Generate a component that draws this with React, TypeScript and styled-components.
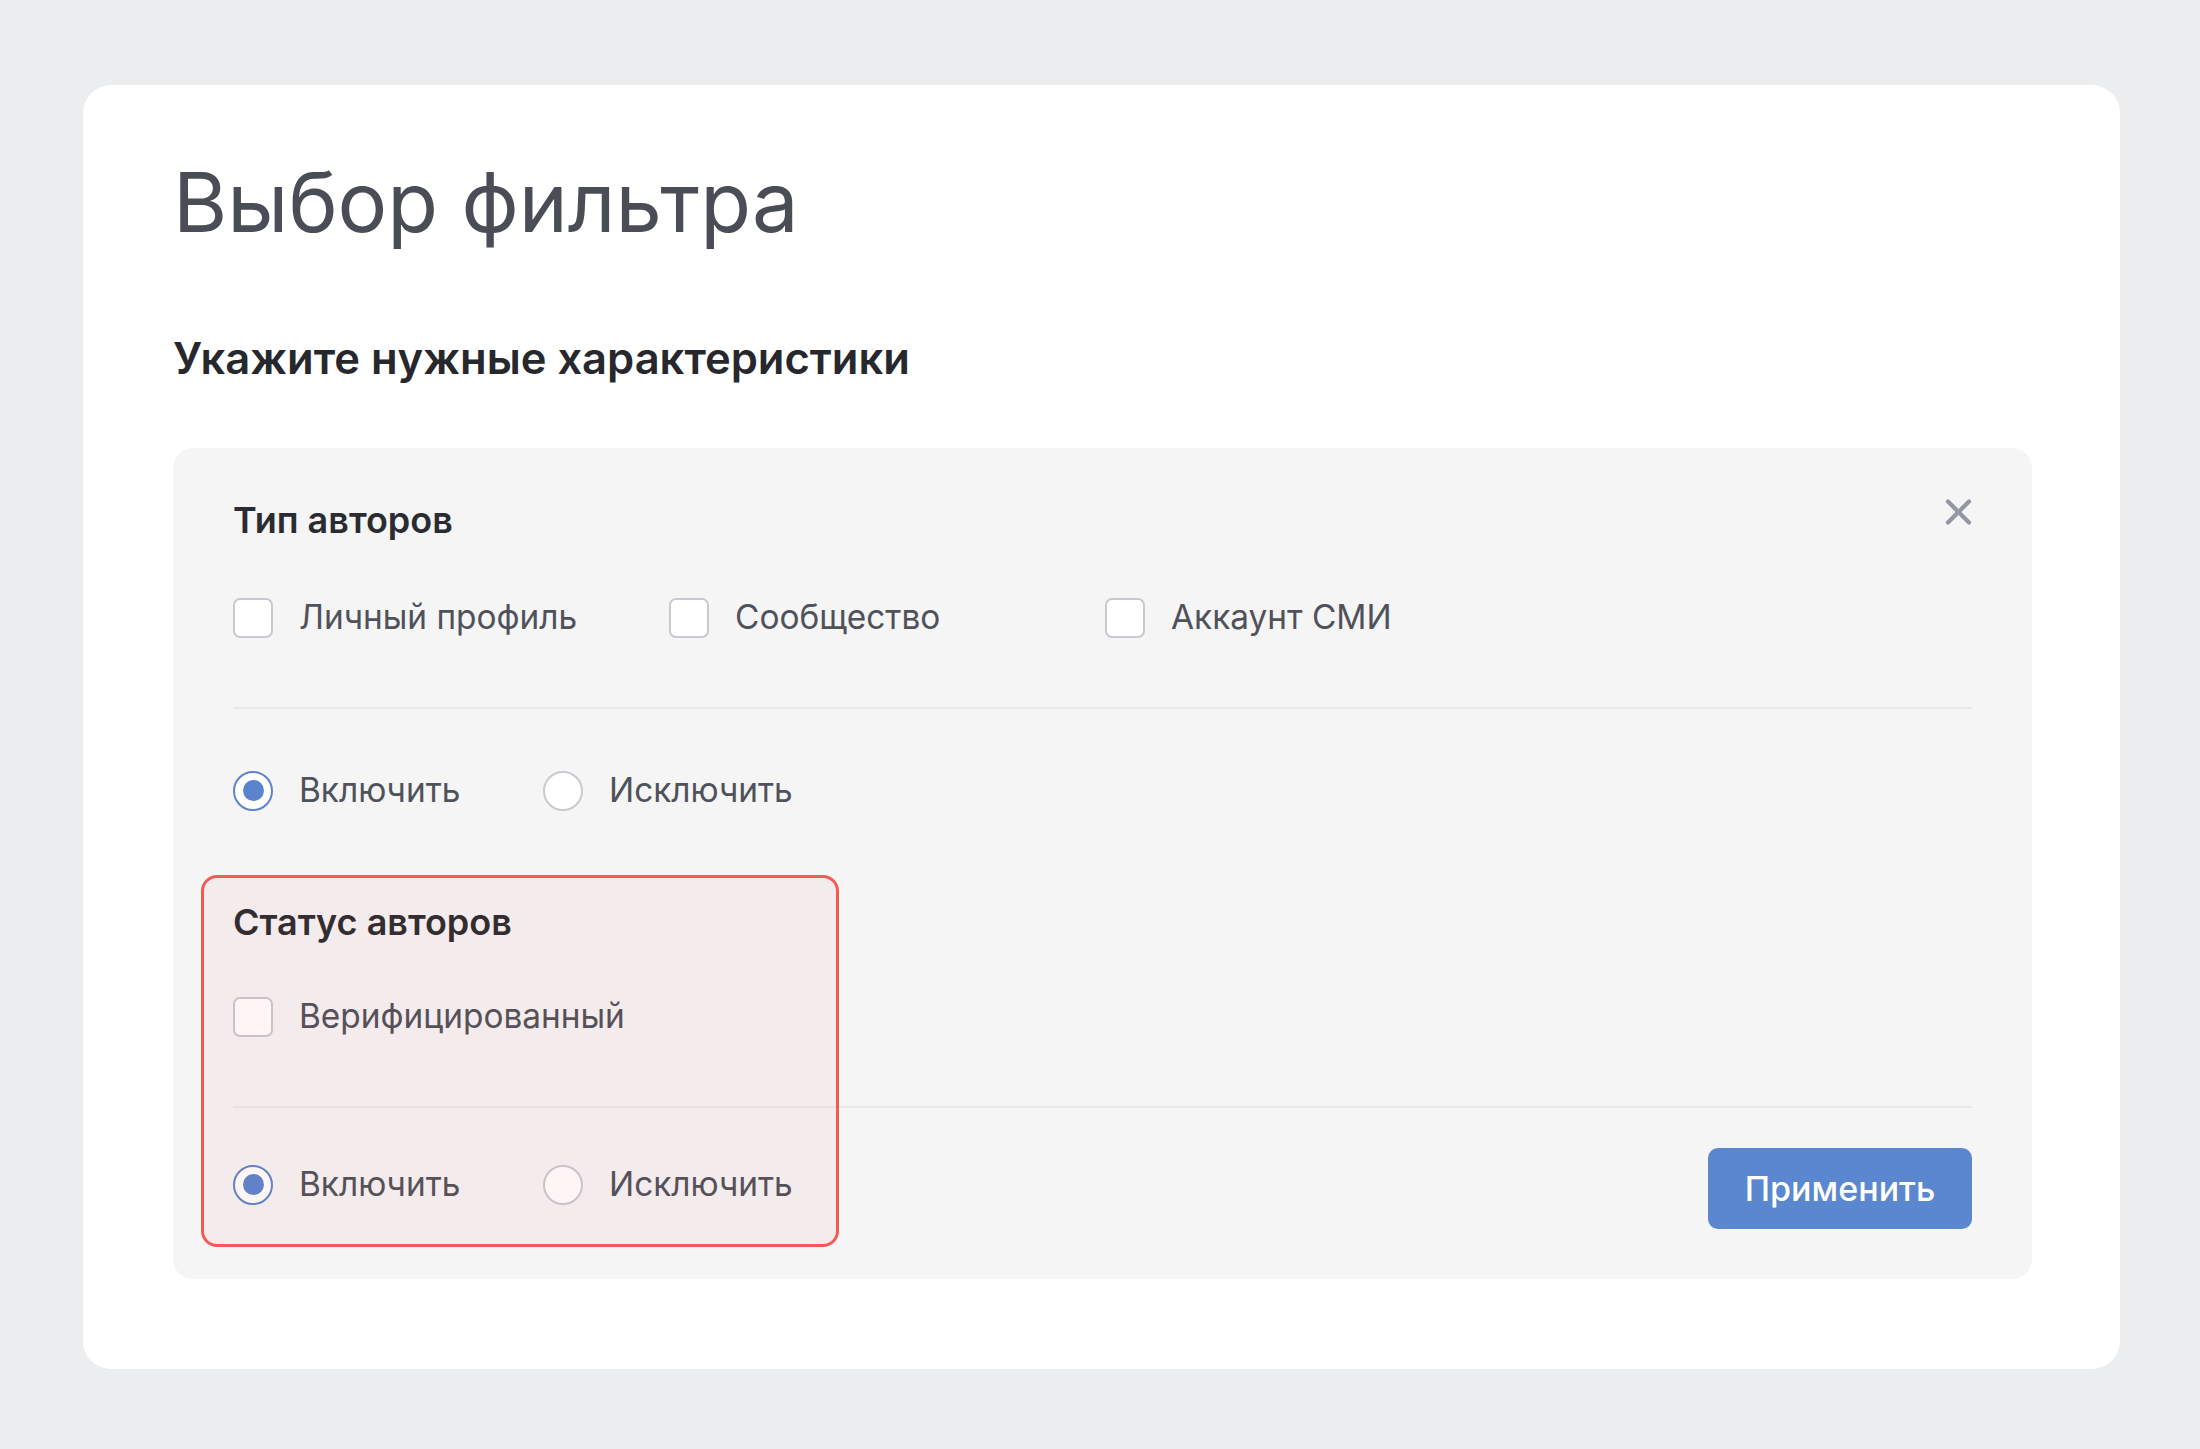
import { ReactNode } from 'react';
import styled, { createGlobalStyle } from 'styled-components';

const GlobalStyle = createGlobalStyle`
  body {
    margin: 0;
    background: #ecedef;
    font-family: Inter, "Noto Sans", sans-serif;
  }
`;

const AUTHOR_TYPES = ['Личный профиль', 'Сообщество', 'Аккаунт СМИ'];

const ScPage = styled.div`
  padding: 85px 80px 81px 83px;
`;

const ScCard = styled.div`
  background: #fff;
  border-radius: 28px;
  padding: 69px 88px 90px 90px;
`;

const ScTitle = styled.h1`
  margin: 0;
  font-size: 83px;
  font-weight: 400;
  line-height: 97px;
  color: #4a4d56;
`;

const ScSubtitle = styled.h2`
  margin: 81px 0 63px;
  font-size: 43.5px;
  font-weight: 600;
  line-height: 53px;
  color: #26282d;
`;

const ScPanel = styled.div`
  background: #f5f5f5;
  border-radius: 20px;
  padding: 50px 60px;
`;

const ScSection = styled.section<{ $gap?: number }>`
  position: relative;
  margin-top: ${p => p.$gap ?? 0}px;
`;

const ScHeader = styled.div`
  display: flex;
  justify-content: space-between;
  align-items: flex-start;
`;

const ScSectionTitle = styled.h3`
  margin: 0;
  font-size: 36px;
  font-weight: 600;
  line-height: 44px;
  color: #2a2c31;
`;

const ScClose = styled.button`
  border: 0;
  background: none;
  padding: 0;
  width: 27px;
  height: 28px;
  display: flex;
  color: #9497a3;
  cursor: pointer;
`;

const ScOptionGrid = styled.div<{ $top: number }>`
  display: grid;
  grid-template-columns: repeat(3, 436px);
  margin-top: ${p => p.$top}px;
`;

const ScOption = styled.label`
  display: flex;
  align-items: center;
  gap: 26px;
  font-size: 33.4px;
  line-height: 41px;
  color: #4f525a;
`;

const ScCheckbox = styled.span`
  flex: none;
  width: 40px;
  height: 40px;
  box-sizing: border-box;
  border: 2px solid #c8cad0;
  border-radius: 7px;
  background: #fff;
`;

const ScRadio = styled.span<{ $checked?: boolean }>`
  flex: none;
  width: 40px;
  height: 40px;
  box-sizing: border-box;
  border-radius: 50%;
  border: 2px solid ${p => (p.$checked ? '#5b84cf' : '#c8cad0')};
  background: #fff;
  display: flex;
  align-items: center;
  justify-content: center;

  &::after {
    content: '';
    width: 21px;
    height: 21px;
    border-radius: 50%;
    background: ${p => (p.$checked ? '#5b84cf' : 'transparent')};
  }
`;

const ScDivider = styled.hr`
  margin: 69px 0 0;
  border: 0;
  height: 2px;
  background: #e8e8ea;
`;

const ScRadioRow = styled.div<{ $top: number }>`
  display: flex;
  justify-content: space-between;
  align-items: flex-start;
  margin-top: ${p => p.$top}px;
`;

const ScRadioGroup = styled.div<{ $offset?: number }>`
  display: grid;
  grid-template-columns: 310px auto;
  margin-top: ${p => p.$offset ?? 0}px;
`;

const ScButton = styled.button`
  width: 264px;
  height: 81px;
  border: 0;
  border-radius: 10px;
  background: #5b87d0;
  color: #fff;
  font-family: Inter, "Noto Sans", sans-serif;
  font-size: 34px;
  font-weight: 500;
  cursor: pointer;
`;

const ScHighlight = styled.div`
  position: absolute;
  left: -32px;
  top: -25px;
  bottom: -18px;
  width: 638px;
  box-sizing: border-box;
  border: 3px solid #f25b55;
  border-radius: 16px;
  background: rgba(240, 80, 80, 0.05);
  pointer-events: none;
`;

function CloseIcon() {
  return <svg width="27" height="28" viewBox="0 0 27 28" fill="none">
    <path d="M3 3.5L24 24.5M24 3.5L3 24.5" stroke="currentColor" strokeWidth="4.2" strokeLinecap="round" />
  </svg>;
}

function RadioChoice({ action, offset }: { action?: ReactNode; offset?: number }) {
  return <>
    <ScRadioGroup $offset={offset}>
      <ScOption><ScRadio $checked />Включить</ScOption>
      <ScOption><ScRadio />Исключить</ScOption>
    </ScRadioGroup>
    {action}
  </>;
}

export default function App() {
  return <ScPage>
    <GlobalStyle />
    <ScCard>
      <ScTitle>Выбор фильтра</ScTitle>
      <ScSubtitle>Укажите нужные характеристики</ScSubtitle>
      <ScPanel>
        <ScSection>
          <ScHeader>
            <ScSectionTitle>Тип авторов</ScSectionTitle>
            <ScClose aria-label="Закрыть"><CloseIcon /></ScClose>
          </ScHeader>
          <ScOptionGrid $top={55}>
            {AUTHOR_TYPES.map(t => <ScOption key={t}><ScCheckbox />{t}</ScOption>)}
          </ScOptionGrid>
          <ScDivider />
          <ScRadioRow $top={61}>
            <RadioChoice />
          </ScRadioRow>
        </ScSection>

        <ScSection $gap={89}>
          <ScSectionTitle>Статус авторов</ScSectionTitle>
          <ScOptionGrid $top={52}>
            <ScOption><ScCheckbox />Верифицированный</ScOption>
          </ScOptionGrid>
          <ScDivider />
          <ScRadioRow $top={40}>
            <RadioChoice offset={16} action={<ScButton>Применить</ScButton>} />
          </ScRadioRow>
          <ScHighlight />
        </ScSection>
      </ScPanel>
    </ScCard>
  </ScPage>;
}
